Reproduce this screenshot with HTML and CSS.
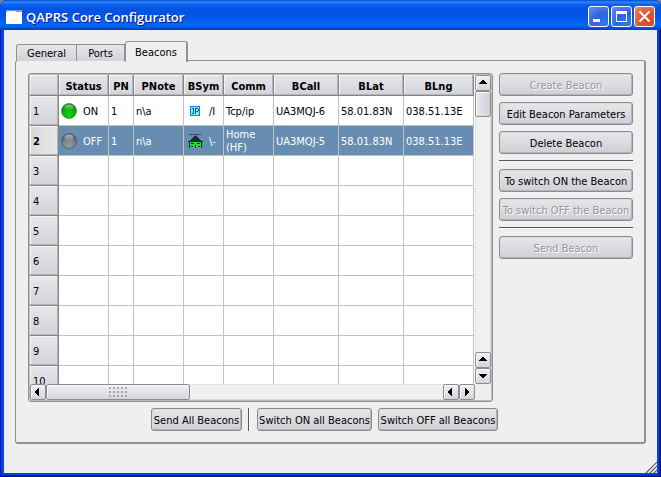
FILE: index.html
```html
<!DOCTYPE html>
<html lang="en">
<head>
<meta charset="utf-8">
<title>QAPRS Core Configurator</title>
<link rel="stylesheet" href="styles.css">
</head>
<body>
<div class="window">
  <header class="titlebar">
    <svg class="app-icon" viewBox="0 0 16 14" aria-hidden="true"><path fill="#fffdf4" d="M0 0h16v14H0z"/><path fill="#58a8f0" d="M0 0h16v2H0z"/><path fill="#d8ecff" d="M1 1h9v1H1z"/><path fill="#e89c7c" d="M14 0h2v1h-2z"/></svg>
    <h1 class="title">QAPRS Core Configurator</h1>
    <div class="window-buttons">
      <button class="win-btn" aria-label="Minimize"><svg viewBox="0 0 21 21"><path fill="#fff" d="M5 13h7v3H5z"/></svg></button>
      <button class="win-btn" aria-label="Maximize"><svg viewBox="0 0 21 21"><path fill="#fff" fill-rule="evenodd" d="M5 5h11v11H5zM6 8v7h9V8z"/></svg></button>
      <button class="win-btn close" aria-label="Close"><svg viewBox="0 0 21 21"><path stroke="#fff" stroke-width="2" d="M5.500 5.500l10 10M15.500 5.500l-10 10"/></svg></button>
    </div>
  </header>
  <main class="content">
    <div class="tabs" role="tablist">
      <button class="tab general" role="tab" aria-selected="false">General</button>
      <button class="tab ports" role="tab" aria-selected="false">Ports</button>
      <button class="tab selected" role="tab" aria-selected="true">Beacons</button>
    </div>
    <section class="panel" role="tabpanel">
      <div class="upper">
        <div class="table-frame">
          <div class="viewport">
            <table class="beacons">
              <colgroup><col class="w29"><col class="w50"><col class="w25"><col class="w50"><col class="w40"><col class="w50"><col class="w65"><col class="w65"><col class="w70"></colgroup>
              <thead><tr><th></th><th>Status</th><th>PN</th><th>PNote</th><th>BSym</th><th>Comm</th><th>BCall</th><th>BLat</th><th>BLng</th></tr></thead>
              <tbody>
                <tr>
                  <th>1</th>
                  <td><div class="with-icon"><svg class="lamp" viewBox="0 0 16 16" aria-hidden="true"><defs><radialGradient id="on" cx=".5" cy=".75" r=".7"><stop offset="0" stop-color="#16d316"/><stop offset=".55" stop-color="#0ab40a"/><stop offset="1" stop-color="#067806"/></radialGradient><linearGradient id="shine" x2="0" y2="1"><stop offset="0" stop-color="#fff" stop-opacity=".55"/><stop offset="1" stop-color="#fff" stop-opacity="0"/></linearGradient></defs><circle cx="8" cy="8" r="7.500" fill="url(#on)" stroke="#2d6b2d" stroke-width=".6"/><ellipse cx="8" cy="4.500" rx="4.500" ry="3" fill="url(#shine)"/></svg>ON</div></td>
                  <td>1</td><td>n\a</td>
                  <td><div class="symbol"><svg viewBox="0 0 16 16" aria-hidden="true"><path fill="#0a86c8" d="M3 3h10v10H3z"/><path fill="#7cf4ff" d="M4 4h8v8H4z"/><path fill="#1450b4" d="M5 5h2v1H5zM6 6h1v4H6zM5 10h2v1H5zM8 5h3v1H8zM8 6h1v5H8zM11 6h1v2h-1zM9 8h2v1H9z"/></svg>/I</div></td>
                  <td>Tcp/ip</td><td>UA3MQJ-6</td><td>58.01.83N</td><td>038.51.13E</td>
                </tr>
                <tr class="current">
                  <th>2</th>
                  <td><div class="with-icon"><svg class="lamp" viewBox="0 0 16 16" aria-hidden="true"><defs><radialGradient id="off" cx=".5" cy=".8" r=".7"><stop offset="0" stop-color="#939da6"/><stop offset=".6" stop-color="#77818b"/><stop offset="1" stop-color="#505962"/></radialGradient></defs><circle cx="8" cy="8" r="7.500" fill="url(#off)" stroke="#4a535c" stroke-width=".6"/><ellipse cx="8" cy="4.500" rx="4.500" ry="3" fill="url(#shine)"/></svg>OFF</div></td>
                  <td>1</td><td>n\a</td>
                  <td><div class="symbol"><svg viewBox="0 0 16 16" aria-hidden="true"><path fill="#3c5261" d="M2 1h12v1H2zM8 2h1v1H8z"/><path fill="#172c25" d="M7 3h3v1H7zM6 4h5v1H6zM5 5h7v1H5zM4 6h9v1H4zM3 7h11v1H3zM1 8h15v1H1zM2 9h13v6H2z"/><path fill="#23d83d" d="M3 9h11v6H3z"/><path fill="#172c25" d="M4 10h3v1H4zM10 10h3v1h-3zM8 12h1v3H8zM4 13h2v1H4zM11 13h2v1h-2z"/></svg>\-</div></td>
                  <td>Home<br>(HF)</td><td>UA3MQJ-5</td><td>58.01.83N</td><td>038.51.13E</td>
                </tr>
                <tr><th>3</th><td></td><td></td><td></td><td></td><td></td><td></td><td></td><td></td></tr>
                <tr><th>4</th><td></td><td></td><td></td><td></td><td></td><td></td><td></td><td></td></tr>
                <tr><th>5</th><td></td><td></td><td></td><td></td><td></td><td></td><td></td><td></td></tr>
                <tr><th>6</th><td></td><td></td><td></td><td></td><td></td><td></td><td></td><td></td></tr>
                <tr><th>7</th><td></td><td></td><td></td><td></td><td></td><td></td><td></td><td></td></tr>
                <tr><th>8</th><td></td><td></td><td></td><td></td><td></td><td></td><td></td><td></td></tr>
                <tr><th>9</th><td></td><td></td><td></td><td></td><td></td><td></td><td></td><td></td></tr>
                <tr><th>10</th><td></td><td></td><td></td><td></td><td></td><td></td><td></td><td></td></tr>
              </tbody>
            </table>
          </div>
          <div class="scroll vertical">
            <button class="arrow" aria-label="Scroll up"><svg viewBox="0 0 16 16"><path d="M7 5h2v1h1v1h1v1h1v1H4V8h1V7h1V6h1z"/></svg></button>
            <div class="thumb"></div>
            <div class="track"></div>
            <button class="arrow" aria-label="Page up"><svg viewBox="0 0 16 16"><path d="M7 5h2v1h1v1h1v1h1v1H4V8h1V7h1V6h1z"/></svg></button>
            <button class="arrow" aria-label="Scroll down"><svg viewBox="0 0 16 16"><path d="M4 6h8v1h-1v1h-1v1H9v1H7V9H6V8H5V7H4z"/></svg></button>
          </div>
          <div class="scroll horizontal">
            <button class="arrow" aria-label="Scroll left"><svg viewBox="0 0 16 16"><path d="M5 7h1V6h1V5h1V4h1v8H8v-1H7v-1H6V9H5z"/></svg></button>
            <div class="thumb"><span class="grip"></span></div>
            <div class="track"></div>
            <button class="arrow" aria-label="Page left"><svg viewBox="0 0 16 16"><path d="M5 7h1V6h1V5h1V4h1v8H8v-1H7v-1H6V9H5z"/></svg></button>
            <button class="arrow" aria-label="Scroll right"><svg viewBox="0 0 16 16"><path d="M10 7H9V6H8V5H7V4H6v8h1v-1h1v-1h1V9h1z"/></svg></button>
          </div>
        </div>
        <div class="actions">
          <button class="btn" disabled>Create Beacon</button>
          <button class="btn">Edit Beacon Parameters</button>
          <button class="btn">Delete Beacon</button>
          <hr class="rule">
          <button class="btn">To switch ON the Beacon</button>
          <button class="btn" disabled>To switch OFF the Beacon</button>
          <hr class="rule">
          <button class="btn" disabled>Send Beacon</button>
        </div>
      </div>
      <div class="lower">
        <button class="btn send-all">Send All Beacons</button>
        <span class="divider"></span>
        <button class="btn on-all">Switch ON all Beacons</button>
        <button class="btn off-all">Switch OFF all Beacons</button>
      </div>
    </section>
    <svg class="resize" viewBox="0 0 13 13" aria-hidden="true"><path stroke="#fff" d="M0 14L14 0M4 14L14 4M8 14L14 8"/><path stroke="#555" stroke-width="1.200" d="M1 14L14 1M5 14L14 5M9 14L14 9"/></svg>
  </main>
</div>
</body>
</html>
```
FILE: styles.css
```css
* { box-sizing: border-box; }

body {
  margin: 0;
  background: #75808f;
  color: #000;
  font-family: "DejaVu Sans Condensed", "DejaVu Sans", sans-serif;
  font-size: 11px;
  line-height: 13px;
}

button {
  margin: 0;
  padding: 0;
  color: inherit;
  font: inherit;
  white-space: nowrap;
}

svg { display: block; }

.window {
  display: flex;
  flex-direction: column;
  height: 100vh;
  padding: 0 4px 4px;
  border-radius: 7px 7px 0 0;
  background: #0842dc;
  box-shadow: inset 1px 0 #0019c0, inset -1px -1px #00138c, inset -2px -2px #0026b8;
}

.titlebar {
  display: flex;
  flex: none;
  align-items: center;
  height: 30px;
  margin: 0 -4px;
  padding: 3px 6px 0;
  border-radius: 7px 7px 0 0;
  background: linear-gradient(#0048d0 0, #2e86fb 2px, #0d66f2 4px, #0455e3 8px, #0253e2 14px, #0560f4 22px, #0764fa 26px, #0350dc 28px, #003dbd 30px);
}

.app-icon { width: 16px; height: 14px; }

.title {
  flex: 1;
  margin: 0 0 0 4px;
  color: #fff;
  font: 600 13px/16px "Open Sans", sans-serif;
  text-shadow: 1px 1px #0a1883;
}

.window-buttons { display: flex; gap: 2px; }

.win-btn {
  width: 21px;
  height: 21px;
  border: 1px solid #fff;
  border-radius: 3px;
  background: radial-gradient(circle at 80% 85%, #2f7bf5, #2a62e0 45%, #6a92ef);
}

.win-btn svg { width: 21px; height: 21px; margin: -1px; }

.close { background: radial-gradient(circle at 80% 85%, #dd4a1c, #e0532b 45%, #ee8b6c); }

.content {
  position: relative;
  display: flex;
  flex: 1;
  flex-direction: column;
  min-height: 0;
  padding: 11px 11px 29px;
  background: #efefef;
}

.tabs {
  position: relative;
  z-index: 1;
  display: flex;
  align-items: flex-end;
  height: 20px;
  padding-left: 1px;
}

.tab {
  height: 17px;
  border: 1px solid #919191;
  border-bottom: 0;
  background: linear-gradient(#e6e6ea, #d2d2d8);
}

.general { width: 61px; border-radius: 3px 0 0 0; }
.ports { width: 48px; border-left: 0; }

.selected {
  width: 63px;
  height: 21px;
  margin-bottom: -1px;
  border-width: 1px 2px 0 1px;
  border-radius: 3px 3px 0 0;
  background: #efefef;
}

.panel {
  display: flex;
  flex: 1;
  flex-direction: column;
  gap: 6px;
  min-height: 0;
  margin-top: -1px;
  padding: 12px 11px 11px 12px;
  border: 1px solid #919191;
  border-right-width: 2px;
  border-bottom-width: 2px;
  border-radius: 3px;
}

.upper {
  display: flex;
  flex: 1;
  gap: 6px;
  min-height: 0;
}

.table-frame {
  display: grid;
  flex: 1;
  grid-template-rows: minmax(0, 1fr) 16px;
  grid-template-columns: minmax(0, 1fr) 16px;
  min-width: 0;
  padding: 1px;
  border: 1px solid #8f8f8f;
  border-radius: 3px;
  background: #efefef;
  box-shadow: inset 0 0 0 1px #bdbdbd;
}

.viewport {
  overflow: hidden;
  background: #fff;
}

.beacons {
  width: 444px;
  border-spacing: 0;
  table-layout: fixed;
}

.w25 { width: 25px; }
.w29 { width: 29px; }
.w40 { width: 40px; }
.w50 { width: 50px; }
.w65 { width: 65px; }
.w70 { width: 70px; }

.beacons th {
  padding: 0;
  border: solid #858585;
  border-width: 0 1px 1px 0;
  background: linear-gradient(#e6e7eb, #d2d3d9);
  box-shadow: inset -1px -1px #b5b5b8, inset 1px 1px #f5f5f7;
}

.beacons thead th { height: 21px; padding-top: 2px; }

.beacons tbody th {
  height: 30px;
  padding: 2px 0 0 3px;
  font-weight: normal;
  text-align: left;
}

.beacons .current th {
  background: linear-gradient(90deg, #d8d8d8, #e8e8e8);
  font-weight: bold;
}

.beacons td {
  padding: 1px 0 0 2px;
  border: solid #c2c2c2;
  border-width: 0 1px 1px 0;
  white-space: nowrap;
}

.beacons .current td {
  background: #678db2;
  color: #fff;
}

.with-icon, .symbol {
  display: flex;
  align-items: center;
  gap: 6px;
}

.symbol { padding-left: 1px; }
.with-icon svg, .symbol svg { flex: none; width: 16px; height: 16px; }

.scroll { display: flex; }
.vertical { flex-direction: column; }

.arrow, .thumb {
  flex: none;
  border: 1px solid #8b8b8b;
  border-radius: 2px;
  background: linear-gradient(#efeff3, #d5d5dc);
  box-shadow: inset 1px 1px #f8f8fa;
}

.arrow { width: 16px; height: 16px; }
.arrow svg { width: 16px; height: 16px; margin: -1px; }
.vertical .thumb { height: 26px; background: linear-gradient(90deg, #e9eaf0, #cfd0d8); }

.horizontal .thumb {
  display: flex;
  align-items: center;
  justify-content: center;
  width: 144px;
}

.grip {
  width: 19px;
  height: 11px;
  background: radial-gradient(circle at 1px 1px, #aaa 1px, transparent 1px) 0 0 / 4px 4px;
}

.track {
  flex: 1;
  border: 1px dotted #ccc;
  background: repeating-conic-gradient(#e8e8e8 0 25%, #f8f8f8 0 50%) 0 0 / 2px 2px;
}

.vertical .track { border-width: 0 1px; }
.horizontal .track { border-width: 1px 0; }

.actions {
  display: flex;
  flex: none;
  flex-direction: column;
  gap: 6px;
  width: 134px;
}

.btn {
  flex: none;
  height: 23px;
  padding-top: 1px;
  border: 1px solid #8c8c8c;
  border-radius: 3px;
  background: linear-gradient(#e6e7eb, #cfcfd6);
  box-shadow: inset -1px -1px #b4b4b8, inset 1px 1px #dadadf;
}

.btn:disabled { color: #969696; text-shadow: 1px 1px #fff; }

.rule {
  width: 100%;
  height: 3px;
  margin: 0;
  border: 0;
  border-top: 1px solid #555;
  background: #fafafa;
  background-clip: content-box;
  padding-bottom: 1px;
}

.lower {
  display: flex;
  flex: none;
  gap: 6px;
  justify-content: center;
  padding-right: 12px;
}

.send-all { width: 91px; }
.on-all { width: 115px; }
.off-all { width: 120px; }
.divider { width: 3px; border-left: 1px solid #555; box-shadow: inset 1px 0 #fff; }

.resize {
  position: absolute;
  right: 0;
  bottom: 0;
  width: 13px;
  height: 13px;
}
```
